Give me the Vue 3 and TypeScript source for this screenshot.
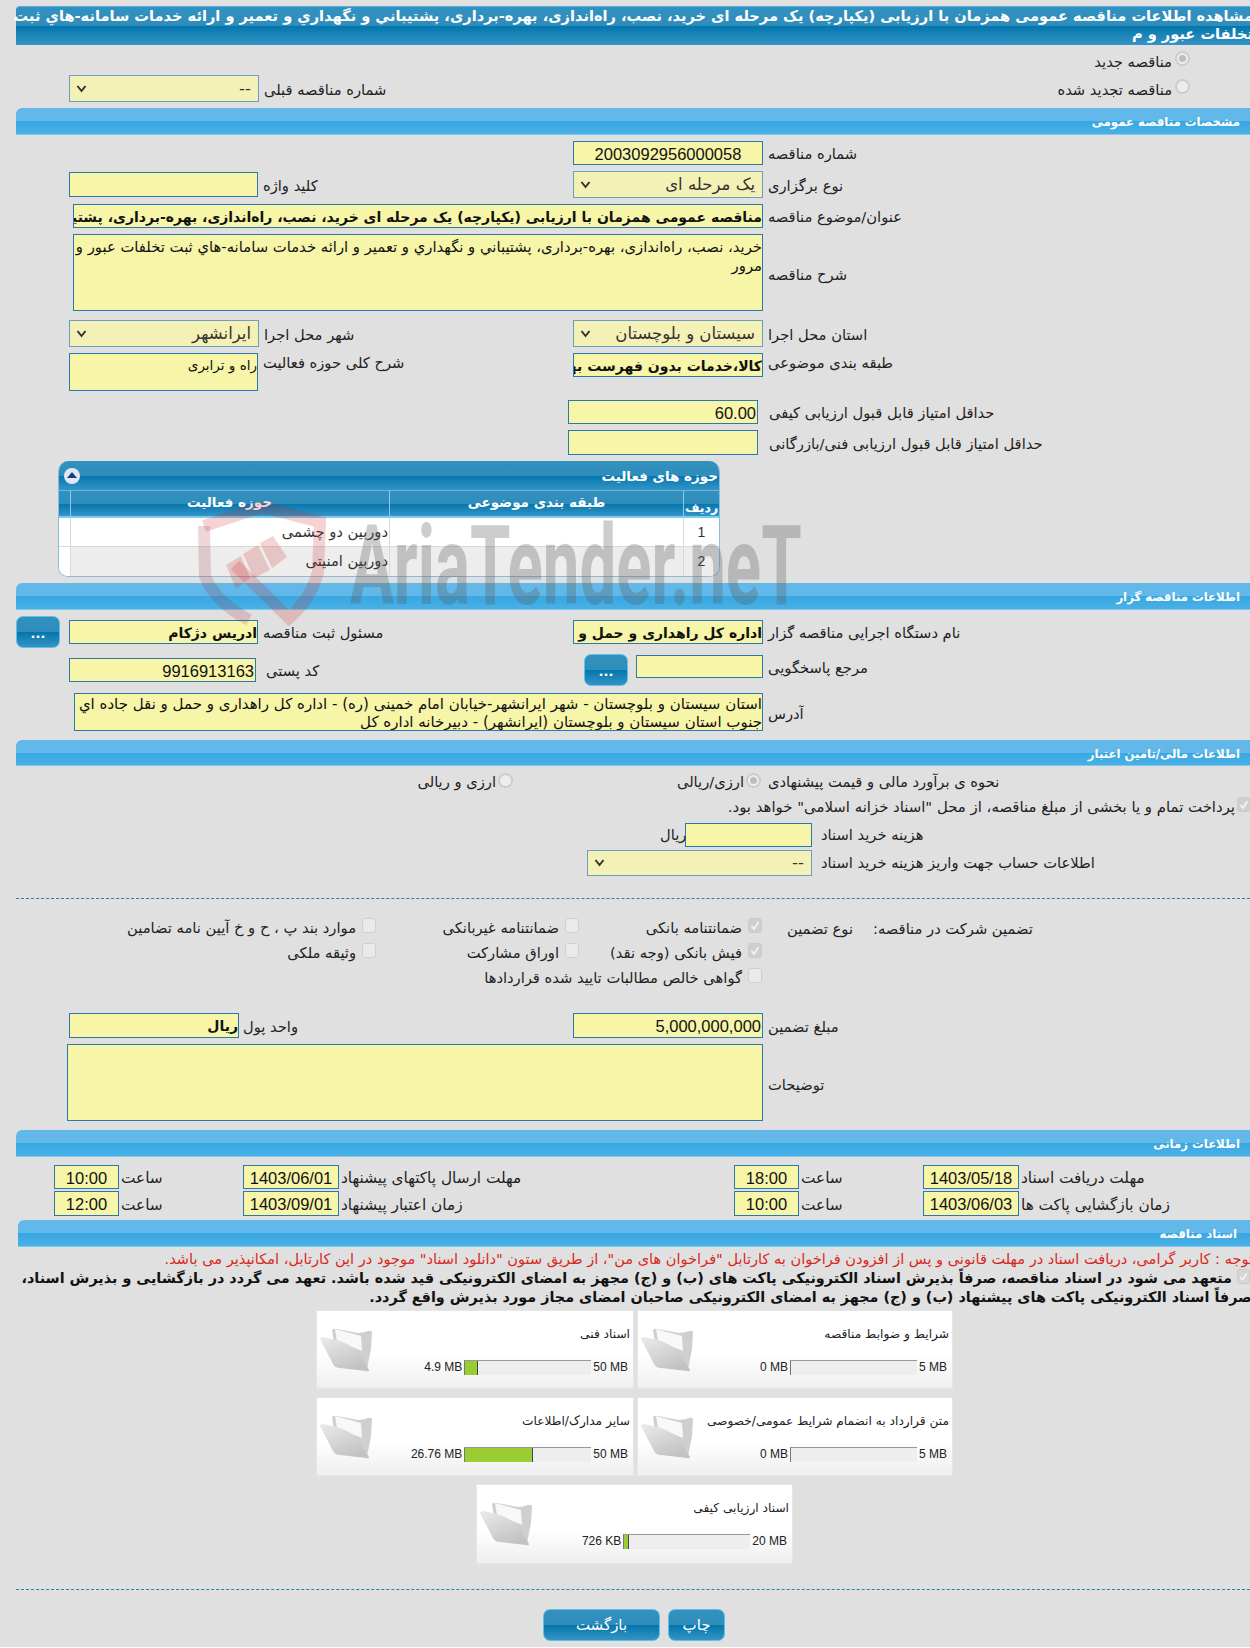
<script setup lang="ts">
interface Doc { title: string; used: string; max: string; pct: number }
const docs: Doc[] = [
  { title: 'شرایط و ضوابط مناقصه', used: '0 MB', max: '5 MB', pct: 0 },
  { title: 'اسناد فنی', used: '4.9 MB', max: '50 MB', pct: 9.8 },
  { title: 'متن قرارداد به انضمام شرایط عمومی/خصوصی', used: '0 MB', max: '5 MB', pct: 0 },
  { title: 'سایر مدارک/اطلاعات', used: '26.76 MB', max: '50 MB', pct: 53.5 },
  { title: 'اسناد ارزیابی کیفی', used: '726 KB', max: '20 MB', pct: 3.6 },
]
const guarantees = [
  { label: 'ضمانتنامه بانکی', on: true },
  { label: 'ضمانتنامه غیربانکی', on: false },
  { label: 'موارد بند پ ، ح و خ آیین نامه تضامین', on: false },
  { label: 'فیش بانکی (وجه نقد)', on: true },
  { label: 'اوراق مشارکت', on: false },
  { label: 'وثیقه ملکی', on: false },
  { label: 'گواهی خالص مطالبات تایید شده قراردادها', on: false },
]
</script>

<template>
  <div class="page">
    <div class="title">مشاهده اطلاعات مناقصه عمومی همزمان با ارزیابی (یکپارچه) یک مرحله ای خرید، نصب، راه‌اندازی، بهره‌-برداری، پشتیباني و نگهداري و تعمير و ارائه خدمات سامانه-هاي ثبت<br />تخلفات عبور و م</div>

    <div class="top-rows">
      <div class="radio-line r1"><span class="lbl">مناقصه جدید</span><i class="radio on"></i></div>
      <div class="prev-row">
        <div class="pair"><div class="box sel w190 h27"><svg class="arrow" viewBox="0 0 10 8"><path d="M1 1l4 5 4-5" /></svg><span>--</span></div><span class="lbl">شماره مناقصه قبلی</span></div>
        <div class="radio-line r2"><span class="lbl">مناقصه تجدید شده</span><i class="radio"></i></div>
      </div>
    </div>

    <div class="bar">مشخصات مناقصه عمومی</div>

    <div class="row mt6 h24">
      <div class="col-l"></div>
      <div class="pair"><div class="box w190 num center">2003092956000058</div><span class="lbl">شماره مناقصه</span></div>
    </div>
    <div class="row mt6 h27">
      <div class="col-l"><div class="pair down1"><div class="box w189 h25"></div><span class="lbl">کلید واژه</span></div></div>
      <div class="pair"><div class="box sel w190 h27"><svg class="arrow" viewBox="0 0 10 8"><path d="M1 1l4 5 4-5" /></svg><span>یک مرحله ای</span></div><span class="lbl">نوع برگزاری</span></div>
    </div>
    <div class="row row-wide mt6 h24">
      <div class="pair"><div class="box w690 bold">مناقصه عمومی همزمان با ارزیابی (یکپارچه) یک مرحله ای خرید، نصب، راه‌اندازی، بهره‌-برداری، پشتیباني و نگهداري و تعمير</div><span class="lbl">عنوان/موضوع مناقصه</span></div>
    </div>
    <div class="row row-wide mt6">
      <div class="pair mid"><div class="box w690 h77 area big">خرید، نصب، راه‌اندازی، بهره‌-برداری، پشتیباني و نگهداري و تعمير و ارائه خدمات سامانه-هاي ثبت تخلفات عبور و مرور</div><span class="lbl">شرح مناقصه</span></div>
    </div>
    <div class="row mt9 h27">
      <div class="col-l"><div class="pair"><div class="box sel w190 h27"><svg class="arrow" viewBox="0 0 10 8"><path d="M1 1l4 5 4-5" /></svg><span>ایرانشهر</span></div><span class="lbl">شهر محل اجرا</span></div></div>
      <div class="pair"><div class="box sel w190 h27 spread"><svg class="arrow" viewBox="0 0 10 8"><path d="M1 1l4 5 4-5" /></svg><span>سیستان و بلوچستان</span></div><span class="lbl">استان محل اجرا</span></div>
    </div>
    <div class="row mt6 h38">
      <div class="col-l"><div class="pair top"><div class="box w189 h38 area">راه و ترابری</div><span class="lbl up">شرح کلی حوزه فعالیت</span></div></div>
      <div class="pair top"><div class="box w190 bold">کالا،خدمات بدون فهرست بها</div><span class="lbl up">طبقه بندی موضوعی</span></div>
    </div>
    <div class="row row-score mt9 h24">
      <div class="pair"><div class="box w190 num">60.00</div><span class="lbl gap5">حداقل امتیاز قابل قبول ارزیابی کیفی</span></div>
    </div>
    <div class="row row-score mt6 h25">
      <div class="pair"><div class="box w190 h25"></div><span class="lbl gap5">حداقل امتیاز قابل قبول ارزیابی فنی/بازرگانی</span></div>
    </div>

    <section class="panel">
      <div class="panel-head"><span class="panel-title">حوزه های فعالیت</span><i class="toggle"><b></b></i></div>
      <div class="thead"><div class="c0"></div><div class="c1">حوزه فعالیت</div><div class="c2">طبقه بندی موضوعی</div><div class="c3">ردیف</div></div>
      <div class="trow"><div class="c0"></div><div class="c1">دوربین دو چشمی</div><div class="c2"></div><div class="c3 num">1</div></div>
      <div class="trow alt"><div class="c0"></div><div class="c1">دوربین امنیتی</div><div class="c2"></div><div class="c3 num">2</div></div>
    </section>

    <div class="bar mt6">اطلاعات مناقصه گزار</div>

    <div class="row-btn mt6">
      <button class="btn small" type="button">...</button>
      <div class="col-l"><div class="pair"><div class="box w189 bold">ادریس دژکام</div><span class="lbl">مسئول ثبت مناقصه</span></div></div>
      <div class="pair"><div class="box w190 bold">اداره کل راهداری و حمل و نقل جاده ای</div><span class="lbl">نام دستگاه اجرایی مناقصه گزار</span></div>
    </div>
    <div class="row mt6 h32">
      <div class="col-l"><div class="pair down4"><div class="box w187 num">9916913163</div><span class="lbl gap10">کد پستی</span></div></div>
      <div class="ref">
        <button class="btn small" type="button">...</button>
        <div class="pair down1"><div class="box w127 h23"></div><span class="lbl">مرجع پاسخگویی</span></div>
      </div>
    </div>
    <div class="row row-addr mt7">
      <div class="pair mid"><div class="box w689 h38 area tight">استان سیستان و بلوچستان - شهر ایرانشهر-خیابان امام خمینی (ره) - اداره کل راهداری و حمل و نقل جاده اي جنوب استان سیستان و بلوچستان (ایرانشهر) - دبیرخانه اداره کل</div><span class="lbl">آدرس</span></div>
    </div>

    <div class="bar mt9 h26">اطلاعات مالی/تامین اعتبار</div>

    <div class="finance">
      <div class="opt o2"><span class="lbl">ارزی و ریالی</span><i class="radio"></i></div>
      <div class="opt o1"><span class="lbl">ارزی/ریالی</span><i class="radio on"></i></div>
      <span class="lbl f-lbl">نحوه ی برآورد مالی و قیمت پیشنهادی</span>
    </div>
    <div class="treasury"><span class="lbl">پرداخت تمام و یا بخشی از مبلغ مناقصه، از محل "اسناد خزانه اسلامی" خواهد بود.</span><i class="check on small-c"><svg viewBox="0 0 12 12"><path d="M2.500 6.500l2.500 3 4.500-7" /></svg></i></div>
    <div class="row-fee">
      <div class="fee-box"><span class="rial lbl">ریال</span><div class="box w127"></div></div>
      <span class="lbl">هزینه خرید اسناد</span>
    </div>
    <div class="row-fee f2">
      <div class="box sel w225 h26"><svg class="arrow" viewBox="0 0 10 8"><path d="M1 1l4 5 4-5" /></svg><span>--</span></div>
      <span class="lbl">اطلاعات حساب جهت واریز هزینه خرید اسناد</span>
    </div>

    <div class="dots d1"></div>

    <div class="guarantee">
      <div class="g-grid">
        <div v-for="g in guarantees" :key="g.label" class="g-item">
          <i class="check" :class="{ on: g.on }"><svg v-if="g.on" viewBox="0 0 12 12"><path d="M2.500 6.500l2.500 3 4.500-7" /></svg></i>
          <span class="lbl">{{ g.label }}</span>
        </div>
      </div>
      <span class="lbl g-l1">نوع تضمین</span>
      <span class="lbl g-l2">تضمین شرکت در مناقصه:</span>
    </div>

    <div class="row h25">
      <div class="col-l"><div class="pair"><div class="box w170 h25 bold">ریال</div><span class="lbl gap4">واحد پول</span></div></div>
      <div class="pair"><div class="box w190 h25 num">5,000,000,000</div><span class="lbl">مبلغ تضمین</span></div>
    </div>
    <div class="row row-desc mt6">
      <div class="pair mid"><div class="box w696 h77 area"></div><span class="lbl">توضیحات</span></div>
    </div>

    <div class="bar mt9">اطلاعات زمانی</div>

    <div class="time-row mt8">
      <div class="pair"><div class="box w65 num center">10:00</div><span class="lbl gap3">ساعت</span></div>
      <div class="pair"><div class="box w96 num center">1403/06/01</div><span class="lbl gap3">مهلت ارسال پاکتهای پیشنهاد</span></div>
      <div class="pair"><div class="box w65 num center">18:00</div><span class="lbl gap3">ساعت</span></div>
      <div class="pair"><div class="box w96 num center">1403/05/18</div><span class="lbl gap3">مهلت دریافت اسناد</span></div>
    </div>
    <div class="time-row mt2">
      <div class="pair"><div class="box w65 num center">12:00</div><span class="lbl gap3">ساعت</span></div>
      <div class="pair"><div class="box w96 num center">1403/09/01</div><span class="lbl gap3">زمان اعتبار پیشنهاد</span></div>
      <div class="pair"><div class="box w65 num center">10:00</div><span class="lbl gap3">ساعت</span></div>
      <div class="pair"><div class="box w96 num center">1403/06/03</div><span class="lbl gap3">زمان بازگشایی پاکت ها</span></div>
    </div>

    <div class="bar docs-bar">اسناد مناقصه</div>

    <p class="notice">توجه : کاربر گرامی، دریافت اسناد در مهلت قانونی و پس از افزودن فراخوان به کارتابل "فراخوان های من"، از طریق ستون "دانلود اسناد" موجود در این کارتابل، امکانپذیر می باشد.</p>
    <div class="pledge">
      <i class="check on pledge-c"><svg viewBox="0 0 12 12"><path d="M2.500 6.500l2.500 3 4.500-7" /></svg></i>
      <p>متعهد می شود در اسناد مناقصه، صرفاً بذیرش اسناد الکترونیکی پاکت های (ب) و (ج) مجهز به امضای الکترونیکی قید شده باشد. تعهد می گردد در بازگشایی و بذیرش اسناد،<br />صرفاً اسناد الکترونیکی پاکت های پیشنهاد (ب) و (ج) مجهز به امضای الکترونیکی صاحبان امضای مجاز مورد بذیرش واقع گردد.</p>
    </div>

    <div class="cards">
      <div v-for="d in docs" :key="d.title" class="card">
        <svg class="folder" viewBox="4 6 56 50">
          <defs>
            <linearGradient id="fold" x1="0" y1="0" x2="0.6" y2="1"><stop offset="0" stop-color="#ebebeb" /><stop offset="1" stop-color="#c2c2c2" /></linearGradient>
          </defs>
          <path d="M17 11q2-2 5-1l21 4q5 0 10-2 3-1 4 1l-1 17-4 20-32-20z" fill="#cfcfcf" />
          <path d="M20 10l26 7 1 15-25-10z" fill="#f8f8f8" />
          <path d="M5 20q0-2 3-2l14 3q13 4 21 12l11 18q0 2-3 1l-26-3q-5 0-7-4z" fill="url(#fold)" />
        </svg>
        <div class="card-body">
          <div class="card-title">{{ d.title }}</div>
          <div class="meter">
            <span class="m-txt">{{ d.used }}</span>
            <div class="m-bar"><div class="m-fill" :class="{ zero: d.pct === 0 }" :style="{ width: d.pct + '%' }"></div></div>
            <span class="m-txt">{{ d.max }}</span>
          </div>
        </div>
      </div>
    </div>

    <div class="dots d2"></div>

    <div class="actions">
      <button class="btn act back" type="button">بازگشت</button>
      <button class="btn act print" type="button">چاپ</button>
    </div>

    <div class="wm" aria-hidden="true">
      <svg class="wm-logo" viewBox="190 490 150 145">
        <path d="M204 526L262 507l58 15-2 50q-8 28-29 46l-54-53" fill="none" stroke="#c22" stroke-opacity=".2" stroke-width="12" />
        <path d="M204 526l1 50q10 26 44 44" fill="none" stroke="#934" stroke-opacity=".2" stroke-width="12" />
        <path d="M226 565l15-9 9 22-14 11zM243 554l15-9 12 25-16 8zM260 543l13-7 14 21-15 11z" fill="#c22" fill-opacity=".2" />
      </svg>
      <span class="wm-text">AriaTender.neT</span>
    </div>
  </div>
</template>

<style scoped>
.page { position: relative; width: 1250px; height: 1647px; overflow: hidden; background: #e0e0e0; padding-top: 6px; box-sizing: border-box; font-family: "DejaVu Sans", "Liberation Sans", sans-serif; font-size: 14.7px; color: #222; line-height: 18px; }
.title { margin-left: 16px; margin-right: -3px; height: 39px; box-sizing: border-box; direction: rtl; color: #fff; font-weight: bold; font-size: 14.6px; line-height: 18px; white-space: nowrap; border-radius: 4px 0 0 0; border-top: 1px solid #55aee0; background: linear-gradient(#3391c0 0, #2f8dbc 50%, #0476ae 51%, #3594c4 100%); }
.bar { margin-left: 16px; height: 27px; box-sizing: border-box; direction: rtl; color: #fff; font-weight: bold; font-size: 11.700px; padding: 5px 10px 0 0; border-radius: 6px 0 0 0; border-bottom: 1px solid #7cc9f0; background: linear-gradient(#62b9e9 0, #62b8e8 50%, #38a7e1 51%, #4ab0e6 100%); }
.bar.h26 { height: 26px; }
.docs-bar { margin-left: 18px; margin-top: 4px; padding-right: 13px; }
.top-rows { height: 63px; }
.radio-line { display: flex; justify-content: flex-end; align-items: flex-start; gap: 3px; margin-right: 60px; }
.radio-line .lbl { margin-top: 2px; }
.r1 { height: 24px; box-sizing: border-box; padding-top: 6px; }
.prev-row { display: flex; justify-content: space-between; margin-left: 69px; margin-top: 6px; }
.r2 { padding-top: 4px; }
.row { display: flex; align-items: flex-start; margin-left: 69px; }
.row-wide { margin-left: 73px; }
.row-score { margin-left: 568px; }
.row-addr { margin-left: 74px; }
.row-desc { margin-left: 67px; }
.col-l { width: 504px; flex: none; }
.pair { display: flex; align-items: center; gap: 5px; }
.pair .lbl { margin-top: 2px; }
.pair.top { align-items: flex-start; }
.pair.top .lbl { margin-top: 1px; }
.pair.mid .lbl { margin-top: 4px; }
.down1 { margin-top: 1px; }
.down4 { margin-top: 4px; }
.gap3 { margin-left: -3px; font-size: 15.300px; }
.gap4 { margin-left: -1px; }
.gap5 { margin-left: 6px; }
.gap10 { margin-left: 5px; }
.mt2 { margin-top: 2px; }
.mt6 { margin-top: 6px; }
.mt7 { margin-top: 7px; }
.mt8 { margin-top: 8px; }
.mt9 { margin-top: 9px; }
.h24 { height: 24px; }
.h25 { height: 25px; }
.h27 { height: 27px; }
.h32 { height: 32px; }
.h38 { height: 38px; }
.lbl { direction: rtl; white-space: nowrap; flex: none; }
.box { box-sizing: border-box; flex: none; height: 24px; direction: rtl; white-space: nowrap; overflow: hidden; background: #f7f5a8; border: 1px solid #2a78ad; color: #111; font-size: 14px; line-height: 24px; }
.box.h23 { height: 23px; }
.box.h25 { height: 25px; }
.box.h26 { height: 26px; }
.box.h27 { height: 27px; }
.box.h38 { height: 38px; }
.box.h77 { height: 77px; }
.w65 { width: 65px; }
.w96 { width: 96px; }
.w127 { width: 127px; }
.w170 { width: 170px; }
.w187 { width: 187px; }
.w189 { width: 189px; }
.w190 { width: 190px; }
.w225 { width: 225px; }
.w689 { width: 689px; }
.w690 { width: 690px; }
.w696 { width: 696px; }
.bold { font-weight: bold; }
.num { font-family: "Liberation Sans", sans-serif; font-size: 16.500px; padding: 0 1px; }
.center { text-align: center; padding: 0; }
.area { white-space: normal; line-height: 19px; padding-top: 2px; font-size: 13.500px; }
.area.big { font-size: 14.800px; }
.area.tight { line-height: 18px; padding-top: 1px; font-size: 15px; }
.sel { display: flex; align-items: center; justify-content: space-between; background: #f3f1b6; border-color: #6a9fc4; direction: ltr; padding: 0 7px 0 6px; font-size: 16.500px; color: #333; }
.sel span { direction: rtl; }
.spread { letter-spacing: 1px; }
.arrow { width: 11px; height: 8px; flex: none; }
.arrow path { fill: none; stroke: #333; stroke-width: 2; }
.radio { display: block; width: 15px; height: 15px; box-sizing: border-box; border-radius: 50%; border: 2px solid #ccc; background: #ededed; flex: none; position: relative; }
.radio.on::after { content: ""; position: absolute; inset: 2px; border-radius: 50%; background: #bdbdbd; }
.check { display: block; flex: none; width: 14px; height: 15px; box-sizing: border-box; border: 1px solid #d0d0d0; border-radius: 3px; background: #eaeaea; }
.check.on { background: #cfcfcf; border-color: #cbcbcb; }
.check svg { display: block; width: 100%; height: 100%; }
.check path { fill: none; stroke: #f4f4f4; stroke-width: 1.800; }
.panel { margin: 6px 0 0 58px; width: 662px; height: 116px; box-sizing: border-box; direction: ltr; border-radius: 10px; overflow: hidden; background: #fff; border: 1px solid #86bde0; border-top: 0; }
.panel-head { height: 30px; display: flex; flex-direction: row-reverse; justify-content: space-between; align-items: center; color: #fff; font-weight: bold; font-size: 13.500px; background: linear-gradient(#3391c0 0, #2f8dbc 50%, #0476ae 51%, #3594c4 100%); border-bottom: 1px solid #6ab6de; padding: 0 1px 0 5px; box-sizing: border-box; }
.panel-title { direction: rtl; }
.toggle { display: block; width: 16px; height: 16px; border-radius: 50%; background: #dfe8f5; position: relative; }
.toggle b { position: absolute; left: 3px; top: 4px; border: 5px solid transparent; border-top: 0; border-bottom: 6px solid #1d3d7a; }
.thead, .trow { display: flex; direction: ltr; }
.thead { height: 27px; color: #fff; font-weight: bold; font-size: 13.500px; background: linear-gradient(#3391c0 0, #2f8dbc 50%, #0476ae 51%, #3594c4 100%); border-bottom: 2px solid #7ccbf0; box-sizing: border-box; }
.thead .c1, .thead .c2 { text-align: center; padding-top: 2px; }
.thead .c3 { padding-top: 8px; font-size: 12.500px; }
.thead > div { border-right: 1px solid #8ccbe9; }
.thead .c0 { background: none; }
.trow { height: 29px; box-sizing: border-box; border-bottom: 1px solid #d9d9d9; color: #333; }
.trow.alt { background: #ededed; border-bottom: 0; }
.trow > div { border-right: 1px solid #d9d9d9; line-height: 28px; }
.c0 { width: 12px; background: #fff; flex: none; box-sizing: border-box; }
.c1 { width: 319px; flex: none; direction: rtl; padding-right: 1px; box-sizing: border-box; }
.c2 { width: 294px; flex: none; direction: rtl; box-sizing: border-box; }
.c3 { flex: 1; text-align: center; direction: rtl; border-right: 0 !important; padding: 0; }
.trow .c3 { font-size: 14px; }
.row-btn { display: flex; align-items: center; height: 32px; margin-left: 16px; }
.row-btn > .btn { margin-right: 9px; }
.btn { box-sizing: border-box; border: 1px solid #5fc0ea; border-radius: 7px; color: #fff; cursor: pointer; font-family: inherit; padding: 0; background: linear-gradient(#3391c0 0, #2f8dbc 50%, #0476ae 51%, #3594c4 100%); }
.btn.small { width: 44px; height: 32px; font-weight: bold; font-size: 13px; line-height: 14px; padding-top: 4px; flex: none; }
.ref { display: flex; align-items: flex-start; margin-left: 11px; gap: 8px; }
.finance { display: flex; height: 21px; margin-top: 6px; align-items: flex-start; }
.opt { display: flex; justify-content: flex-end; align-items: flex-start; gap: 2px; flex: none; }
.opt .lbl { margin-top: 1px; }
.opt .radio { margin-top: 1px; }
.o2 { width: 513px; }
.o1 { width: 248px; }
.f-lbl { margin: 1px 0 0 7px; }
.treasury { display: flex; justify-content: flex-end; margin-top: 3px; height: 21px; gap: 2px; margin-right: -1px; }
.treasury .lbl { margin-top: 2px; font-size: 14.900px; }
.small-c { margin-top: 1px; }
.row-fee { display: flex; align-items: center; margin-left: 587px; gap: 9px; margin-top: 6px; height: 24px; }
.fee-box { display: flex; width: 225px; justify-content: flex-end; align-items: center; position: relative; }
.rial { position: absolute; left: 73px; }
.row-fee.f2 { margin-top: 3px; height: 26px; }
.dots { margin-left: 16px; border-top: 1px dashed #2a7fb5; height: 0; }
.d1 { margin-top: 22px; }
.d2 { margin-top: 25px; }
.guarantee { display: flex; align-items: flex-start; height: 95px; margin-top: 19px; }
.g-grid { width: 762px; flex: none; display: grid; direction: rtl; grid-template-columns: 183px 203px 1fr; grid-auto-rows: 25px; }
.g-item { display: flex; gap: 6px; align-items: flex-start; }
.g-item .lbl { margin-top: 1px; }
.g-l1 { margin-left: 25px; margin-top: 2px; }
.g-l2 { margin-left: 20px; margin-top: 2px; }
.time-row { display: grid; grid-template-columns: 189px 491px 189px 1fr; margin-left: 54px; }
.time-row .box { height: 24px; }
.time-row + .time-row .box { height: 25px; }
.notice { margin: 3px -3px 0 0; direction: rtl; color: #d8281e; font-size: 14.550px; line-height: 18px; white-space: nowrap; height: 18px; }
.pledge { position: relative; margin: 1px -8px 0 0; height: 40px; direction: rtl; }
.pledge p { margin: 0; padding-right: 6px; text-indent: 20px; font-weight: bold; color: #111; font-size: 14.370px; line-height: 19px; white-space: nowrap; }
.pledge-c { position: absolute; right: 8px; top: 0; width: 13px; }
.pledge .check { background: #d6d6d6; }
.cards { display: grid; margin: 1px 0 0 316px; width: 637px; direction: rtl; grid-template-columns: 316px 318px; gap: 8px 3px; }
.card { direction: ltr; box-sizing: border-box; width: 318px; height: 79px; display: flex; background: linear-gradient(#fff 0, #fff 55%, #efefef 100%); border: 1px solid #e6e6e6; }
.card:nth-child(odd) { width: 316px; }
.card:last-child { grid-column: 1 / -1; justify-self: center; width: 317px; height: 80px; }
.folder { width: 56px; height: 50px; flex: none; margin: 14px 0 0 2px; filter: blur(.4px); }
.card-body { flex: 1; direction: rtl; padding: 14px 3px 0 0; min-width: 0; }
.card-title { font-size: 12.200px; line-height: 18px; color: #222; height: 33px; white-space: nowrap; }
.meter { direction: ltr; display: flex; justify-content: flex-end; align-items: center; padding-right: 2px; gap: 2px; }
.m-txt { font-family: "Liberation Sans", sans-serif; font-size: 12px; color: #222; white-space: nowrap; }
.m-bar { width: 127px; height: 15px; box-sizing: border-box; border-top: 1px solid #999; border-left: 1px solid #777; background: #eee; flex: none; }
.m-fill { height: 100%; background: #9acd32; box-sizing: border-box; border-right: 1px solid #445; }
.m-fill.zero { border: 0; }
.actions { display: flex; margin: 19px 0 0 543px; gap: 8px; }
.act { height: 32px; font-size: 15px; }
.back { width: 117px; }
.print { width: 57px; }
.wm { position: absolute; inset: 0; pointer-events: none; }
.wm-logo { position: absolute; left: 190px; top: 490px; width: 150px; height: 145px; }
.wm-text { position: absolute; left: 350px; top: 501px; font-family: "Roboto", "Liberation Sans", sans-serif; font-weight: 700; font-size: 112px; line-height: 130px; color: rgba(90, 90, 90, .3); transform: scaleX(.583); transform-origin: left top; white-space: nowrap; }
</style>

<style>
body { margin: 0; background: #fff; }
</style>
